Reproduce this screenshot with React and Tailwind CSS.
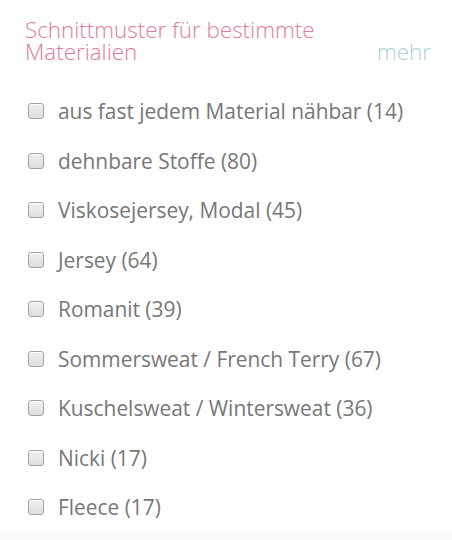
import React from "react";

const items = [
  "aus fast jedem Material nähbar (14)",
  "dehnbare Stoffe (80)",
  "Viskosejersey, Modal (45)",
  "Jersey (64)",
  "Romanit (39)",
  "Sommersweat / French Terry (67)",
  "Kuschelsweat / Wintersweat (36)",
  "Nicki (17)",
  "Fleece (17)",
];

export default function App() {
  return (
    <div className="w-[452px] h-[540px] bg-white overflow-hidden flex flex-col" style={{ fontFamily: '"Open Sans", sans-serif' }}>
      <div className="flex items-end justify-between pl-[25px] pr-[21px] pt-[19px]">
        <h2 className="text-[22.4px] leading-[22px] font-light text-[#e07b9e] w-[320px]">
          Schnittmuster für bestimmte Materialien
        </h2>
        <span className="text-[22.4px] leading-[22px] font-light text-[#a9d1d1]">mehr</span>
      </div>
      <ul className="flex flex-col pl-[28px] pt-[36px] gap-[25.5px]">
        {items.map((t) => (
          <li key={t} className="flex items-center gap-[14px]">
            <span className="w-[16px] h-[16px] rounded-[3px] border border-[#a3a3a3] bg-gradient-to-b from-[#f0f0f0] to-[#dedede] shadow-[inset_0_1px_0_#fff]" />
            <span className="text-[20.9px] leading-[24px] text-[#777777]">{t}</span>
          </li>
        ))}
      </ul>
      <div className="flex-1" />
      <div className="h-[16px] bg-gradient-to-b from-[#ffffff] to-[#f8f8f8]" />
    </div>
  );
}
